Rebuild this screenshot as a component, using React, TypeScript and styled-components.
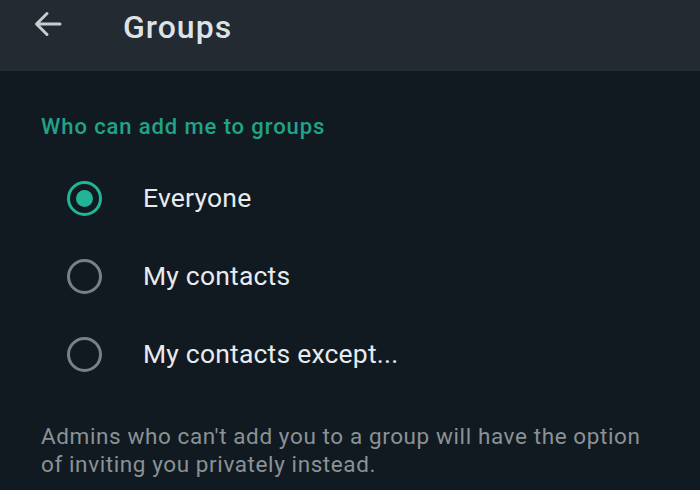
import styled, { createGlobalStyle } from "styled-components"

const GlobalStyle = createGlobalStyle`
  html, body {
    margin: 0;
    padding: 0;
    background: #111a21;
    font-family: Roboto, "Noto Sans", "Liberation Sans", sans-serif;
  }
`

const Screen = styled.div`
  width: 700px;
  height: 490px;
  overflow: hidden;
  background: #111a21;
  display: flex;
  flex-direction: column;
`

const Header = styled.div`
  height: 71px;
  background: #232a31;
  display: flex;
  align-items: center;
  padding-left: 33px;
  box-sizing: border-box;
`

const BackButton = styled.div`
  width: 30px;
  height: 30px;
  display: flex;
  align-items: center;
  justify-content: center;
  margin-top: -23px;
  margin-right: 60px;
`

const Title = styled.h1`
  margin: -18px 0 0 0;
  font-size: 32px;
  font-weight: 500;
  color: #dde2e6;
  letter-spacing: 1px;
`

const Content = styled.div`
  padding: 43px 0 0 41px;
  display: flex;
  flex-direction: column;
`

const SectionTitle = styled.div`
  font-size: 22px;
  font-weight: 500;
  color: #22a387;
  line-height: 26px;
  letter-spacing: 0.9px;
`

const Options = styled.div`
  display: flex;
  flex-direction: column;
  margin-top: 19px;
  margin-left: 26px;
`

const Option = styled.div`
  height: 78px;
  display: flex;
  align-items: center;
  gap: 41px;
`

const Radio = styled.div<{ $checked?: boolean }>`
  width: 35px;
  height: 35px;
  box-sizing: border-box;
  border-radius: 50%;
  border: 3px solid ${p => (p.$checked ? "#22b497" : "#7a8186")};
  display: flex;
  align-items: center;
  justify-content: center;

  &::after {
    content: "";
    display: ${p => (p.$checked ? "block" : "none")};
    width: 17px;
    height: 17px;
    border-radius: 50%;
    background: #22b497;
  }
`

const OptionLabel = styled.div`
  font-size: 26.5px;
  color: #e8ebed;
  line-height: 30px;
  letter-spacing: 0.2px;
`

const Note = styled.p`
  margin: 29px 0 0 0;
  font-size: 22.5px;
  line-height: 28px;
  color: #8b9296;
  letter-spacing: 0.6px;
`

const options = [
  { label: "Everyone", checked: true },
  { label: "My contacts", checked: false },
  { label: "My contacts except...", checked: false },
]

export default function App() {
  return (
    <>
      <GlobalStyle />
      <Screen>
        <Header>
          <BackButton>
            <svg width="28" height="28" viewBox="0 0 28 28" fill="none">
              <path
                d="M26 14H3M13 3.5L2.5 14L13 24.5"
                stroke="#c9cdd1"
                strokeWidth="3"
                strokeLinecap="round"
                strokeLinejoin="round"
              />
            </svg>
          </BackButton>
          <Title>Groups</Title>
        </Header>
        <Content>
          <SectionTitle>Who can add me to groups</SectionTitle>
          <Options>
            {options.map(o => (
              <Option key={o.label}>
                <Radio $checked={o.checked} />
                <OptionLabel>{o.label}</OptionLabel>
              </Option>
            ))}
          </Options>
          <Note>
            Admins who can't add you to a group will have the option
            <br />
            of inviting you privately instead.
          </Note>
        </Content>
      </Screen>
    </>
  )
}
